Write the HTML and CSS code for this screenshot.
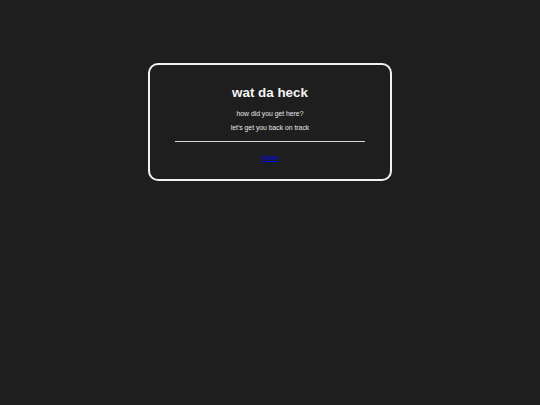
FILE: index.html
```html
<!DOCTYPE html>
<html lang="en">
<head>
  <meta charset="UTF-8" />
  <meta name="viewport" content="width=device-width, initial-scale=1.0"/>
  <title>404</title>
  <link rel="stylesheet" href="styles.css">
</head>
<body>
  <div class="page">
    <div class="card">
      <h1>wat da heck</h1>
      <p>how did you get here?</p>
      <p>let's get you back on track</p>
      <hr>
      <p class="back"><a href="/">home</a></p>
    </div>
  </div>
</body>
</html>
```

FILE: styles.css
```css
* {
  box-sizing: border-box;
}

body {
  margin: 0;
  background: #1e1e1e;
  color: #e8e8e8;
  font-family: 'Liberation Sans', Arial, sans-serif;
  font-size: 6.8px;
}

.page {
  display: flex;
  justify-content: center;
  padding-top: 63px;
}

.card {
  width: 244px;
  height: 118px;
  padding: 11px 25px 0;
  border: 2px solid #f2f2f2;
  border-radius: 10px;
  text-align: center;
}

h1 {
  font-size: 13.4px;
  margin: 9px 0 10px;
  color: #f4f4f4;
}

p {
  margin: 6.6px 0;
}

hr {
  width: 190px;
  margin: 10.5px auto 0;
  border: none;
  border-top: 1px solid #d8d8d8;
}

.back {
  margin-top: 11.5px;
}

.back a {
  color: #0000ee;
}
```
